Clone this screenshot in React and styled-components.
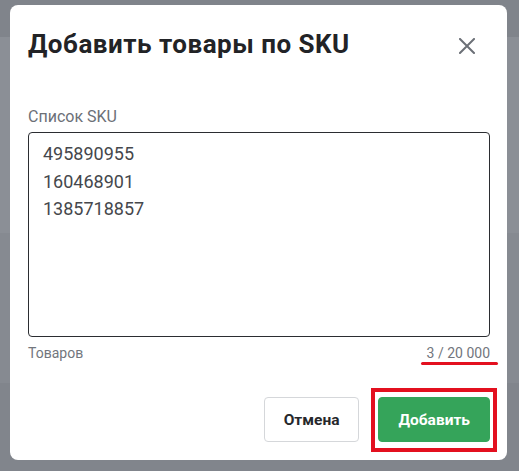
import React from "react";
import styled, { createGlobalStyle } from "styled-components";

const Global = createGlobalStyle`
  html, body { margin: 0; padding: 0; }
  body {
    width: 519px;
    height: 471px;
    overflow: hidden;
    font-family: Roboto, "Noto Sans", sans-serif;
    background: linear-gradient(
      to bottom,
      #80848b 0px, #80848b 37px,
      #8b8f96 37px, #8b8f96 233px,
      #868a91 233px, #868a91 383px,
      #81858c 383px, #81858c 471px
    );
  }
`;

const Overlay = styled.div`
  padding: 5px 12px 11px 10px;
`;

const Modal = styled.div`
  background: #fff;
  border-radius: 8px;
  height: 455px;
  box-sizing: border-box;
  padding: 24px 17px 18px 18px;
  display: flex;
  flex-direction: column;
`;

const Header = styled.div`
  display: flex;
  align-items: center;
  justify-content: space-between;
`;

const Title = styled.h1`
  margin: 0;
  font-size: 26px;
  line-height: 31px;
  font-weight: 700;
  color: #222326;
  letter-spacing: 0.5px;
`;

const CloseButton = styled.button`
  border: 0;
  background: none;
  padding: 0;
  width: 24px;
  height: 24px;
  margin-right: 11px;
  margin-top: 2px;
  display: flex;
  align-items: center;
  justify-content: center;
  color: #6c7077;
`;

const Field = styled.div`
  margin-top: 47px;
  display: flex;
  flex-direction: column;
`;

const Label = styled.div`
  font-size: 16px;
  line-height: 19px;
  color: #6c7077;
  margin-bottom: 6px;
`;

const Area = styled.div`
  height: 205px;
  box-sizing: border-box;
  border: 1px solid #2b2d31;
  border-radius: 4px;
  padding: 7px 14px;
  font-size: 18px;
  line-height: 27.5px;
  color: #45474c;
  white-space: pre-line;
`;

const Meta = styled.div`
  display: flex;
  justify-content: space-between;
  margin-top: 8px;
  font-size: 14px;
  line-height: 17px;
  color: #72767d;
`;

const Counter = styled.span`
  position: relative;
  &::after {
    content: "";
    position: absolute;
    left: -6px;
    right: -8px;
    bottom: -3px;
    height: 3px;
    border-radius: 2px;
    background: #e3101f;
  }
`;

const Footer = styled.div`
  margin-top: auto;
  display: flex;
  justify-content: flex-end;
  gap: 19px;
`;

const Button = styled.button`
  position: relative;
  height: 45px;
  box-sizing: border-box;
  padding: 0 ${(p) => (p.$primary ? "19px" : "19px")};
  border-radius: 4px;
  font-family: Roboto, "Noto Sans", sans-serif;
  font-size: 15.5px;
  font-weight: 700;
  border: 1px solid ${(p) => (p.$primary ? "#35a45a" : "#d5d7da")};
  background: ${(p) => (p.$primary ? "#35a45a" : "#fff")};
  color: ${(p) => (p.$primary ? "#fff" : "#26282c")};
  ${(p) =>
    p.$highlight &&
    `
    &::after {
      content: "";
      position: absolute;
      left: -8px;
      right: -8px;
      top: -10px;
      bottom: -11px;
      border: 4px solid #e3101f;
      pointer-events: none;
    }
  `}
`;

export default function App() {
  return (
    <>
      <Global />
      <Overlay>
        <Modal>
          <Header>
            <Title>Добавить товары по SKU</Title>
            <CloseButton aria-label="Закрыть">
              <svg width="16" height="16" viewBox="0 0 16 16">
                <path d="M1 1L15 15M15 1L1 15" stroke="currentColor" strokeWidth="2" strokeLinecap="square" />
              </svg>
            </CloseButton>
          </Header>
          <Field>
            <Label>Список SKU</Label>
            <Area>{"495890955\n160468901\n1385718857"}</Area>
            <Meta>
              <span>Товаров</span>
              <Counter>3 / 20 000</Counter>
            </Meta>
          </Field>
          <Footer>
            <Button>Отмена</Button>
            <Button $primary $highlight>Добавить</Button>
          </Footer>
        </Modal>
      </Overlay>
    </>
  );
}
